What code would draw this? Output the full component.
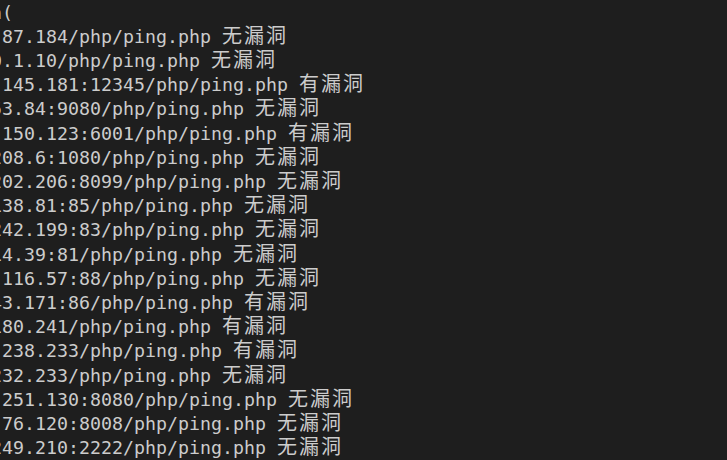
const lines: [string, string, string][] = [
  ["run_scan", "(", ""],
  ["59.110.", "87.184/php/ping.php ", "无漏洞"],
  ["10.10", ".1.10/php/ping.php ", "无漏洞"],
  ["47.92.", "145.181:12345/php/ping.php ", "有漏洞"],
  ["61.15", "3.84:9080/php/ping.php ", "无漏洞"],
  ["39.105.", "150.123:6001/php/ping.php ", "有漏洞"],
  ["120.79.2", "08.6:1080/php/ping.php ", "无漏洞"],
  ["47.106.2", "02.206:8099/php/ping.php ", "无漏洞"],
  ["121.41.1", "38.81:85/php/ping.php ", "无漏洞"],
  ["114.55.2", "42.199:83/php/ping.php ", "无漏洞"],
  ["218.28.1", "4.39:81/php/ping.php ", "无漏洞"],
  ["39.98.", "116.57:88/php/ping.php ", "无漏洞"],
  ["49.234.4", "3.171:86/php/ping.php ", "有漏洞"],
  ["103.45.1", "80.241/php/ping.php ", "有漏洞"],
  ["60.205.", "238.233/php/ping.php ", "有漏洞"],
  ["118.25.2", "32.233/php/ping.php ", "无漏洞"],
  ["47.100.", "251.130:8080/php/ping.php ", "无漏洞"],
  ["123.57.", "76.120:8008/php/ping.php ", "无漏洞"],
  ["106.13.2", "49.210:2222/php/ping.php ", "无漏洞"],
];

export default function App() {
  return (
    <div className="h-[460px] w-full overflow-hidden bg-[#1e1e1e] pt-[0.7px] text-[#cccccc]">
      {lines.map(([hidden, text, result], i) => (
        <div
          key={i}
          className="-ml-[108px] h-[24.2px] whitespace-pre font-['DejaVu_Sans_Mono'] text-[18.27px] leading-[24.2px]"
        >
          {hidden.padStart(10, " ")}
          {text}
          {result && (
            <span className="font-['Noto_Sans_CJK_SC',sans-serif] text-[20px] leading-[0] tracking-[2px]">
              {result}
            </span>
          )}
        </div>
      ))}
    </div>
  );
}
